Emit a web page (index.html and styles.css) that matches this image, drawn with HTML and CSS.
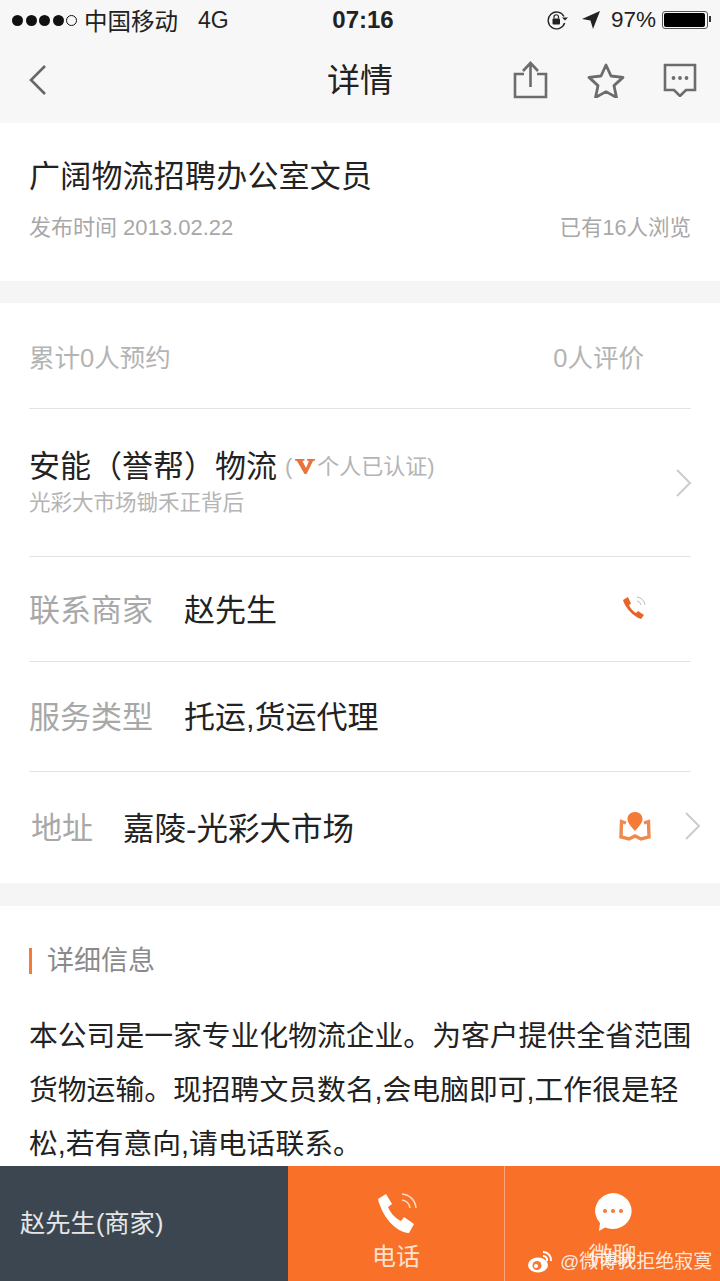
FILE: index.html
```html
<!DOCTYPE html>
<html lang="zh-CN">
<head>
    <meta charset="UTF-8">
    <meta name="viewport" content="width=720, initial-scale=1.0">
    <title>详情</title>
    <link rel="stylesheet" href="styles.css">
</head>
<body>
    <div class="top">
        <div class="status-bar">
            <div class="status-left">
                <span class="signal"><i></i><i></i><i></i><i></i><i class="empty"></i></span>
                <span class="carrier">中国移动</span>
                <span class="network">4G</span>
            </div>
            <div class="status-time">07:16</div>
            <div class="status-right">
                <svg class="lock-icon" width="24" height="20" viewBox="0 0 24 20"><path d="M18 6.5A8.4 8.4 0 1 0 18.600 13" fill="none" stroke="#222" stroke-width="1.400"/><path d="M16 7.500h6l-3 3z" fill="#222"/><rect x="6.500" y="8.500" width="7.500" height="6" rx="1" fill="#222"/><path d="M8 8.500V7a2.200 2.200 0 0 1 4.500 0v1.500" fill="none" stroke="#222" stroke-width="1.200"/></svg>
                <svg class="location-icon" width="20" height="20" viewBox="0 0 20 20"><path d="M19 1L1 9l8.500 1.500L12 19z" fill="#222"/></svg>
                <span class="battery-text">97%</span>
                <span class="battery"><span class="battery-level"></span></span>
            </div>
        </div>
        <div class="nav-bar">
            <svg class="back-icon" width="20" height="32" viewBox="0 0 20 32"><path d="M17 2L3 16l14 14" fill="none" stroke="#666" stroke-width="2.600"/></svg>
            <h1>详情</h1>
            <div class="nav-actions">
                <svg width="36" height="38" viewBox="0 0 36 38"><path d="M11 13H2v23h31V13h-9" fill="none" stroke="#6c6c6c" stroke-width="2.600"/><path d="M17.500 26V3M10 10l7.500-8L25 10" fill="none" stroke="#6c6c6c" stroke-width="2.600"/></svg>
                <svg width="38" height="36" viewBox="0 0 38 36"><path d="M19 3l5 11 12 1.400-9 8.200 2.500 11.900L19 29.600 8.500 35.500 11 23.600 2 15.400 14 14z" fill="none" stroke="#6c6c6c" stroke-width="2.800" stroke-linejoin="round"/></svg>
                <svg width="34" height="34" viewBox="0 0 34 34"><path d="M2 2h30v25h-9l-6 6-6-6H2z" fill="none" stroke="#6c6c6c" stroke-width="2.600"/><circle cx="10.500" cy="15" r="1.900" fill="#6c6c6c"/><circle cx="17" cy="15" r="1.900" fill="#6c6c6c"/><circle cx="23.500" cy="15" r="1.900" fill="#6c6c6c"/></svg>
            </div>
        </div>
    </div>

    <section class="card head-card">
        <h2>广阔物流招聘办公室文员</h2>
        <div class="meta">
            <span>发布时间 2013.02.22</span>
            <span class="views">已有16人浏览</span>
        </div>
    </section>

    <section class="card info-card">
        <div class="row row-stats">
            <span>累计0人预约</span>
            <span class="reviews">0人评价</span>
        </div>
        <div class="row row-company">
            <div class="company">
                <div class="company-name">安能（誉帮）物流<span class="verified">(<svg width="20" height="15" viewBox="0 0 20 15"><path d="M0 0h9.500v1.500L7.500 2l3.500 7 3-7-2-.5V0H20v1.500L18 2l-6.500 13h-2L2 2 0 1.500z" fill="#e8743b"/></svg>个人已认证)</span></div>
                <div class="company-addr">光彩大市场锄禾正背后</div>
            </div>
            <svg class="chevron" width="18" height="28" viewBox="0 0 18 28"><path d="M2 1l13 13L2 27" fill="none" stroke="#ccc" stroke-width="2"/></svg>
        </div>
        <div class="row row-contact">
            <span class="label">联系商家</span>
            <span class="value">赵先生</span>
            <svg class="contact-icon" width="26" height="26" viewBox="0 0 26 26"><path d="M1 5l5-3 3 6.500-2 1.500c1.500 3.500 4 6 7 8l2-2 6 4-3 4C12 22 3 13 1 5z" fill="#e8652a"/><path d="M15 2a9 9 0 0 1 8 8M15 6a5 5 0 0 1 4 4" fill="none" stroke="#bbb" stroke-width="1"/></svg>
        </div>
        <div class="row row-service">
            <span class="label">服务类型</span>
            <span class="value">托运,货运代理</span>
        </div>
        <div class="row row-address">
            <span class="label label-short">地址</span>
            <span class="value">嘉陵-光彩大市场</span>
            <svg class="map-icon" width="32" height="30" viewBox="0 0 32 30"><path d="M7 12l-4.500-1.500L2 26l8 2 6-3 6 3 8-2-.5-15.500L25 12" fill="none" stroke="#ee8a4f" stroke-width="3.400"/><path d="M16 1c4.500 0 7.500 3 7.500 7 0 4-4 8-7.500 12-3.500-4-7.500-8-7.500-12 0-4 3-7 7.500-7z" fill="#f47a38"/></svg>
            <svg class="chevron" width="18" height="28" viewBox="0 0 18 28"><path d="M2 1l13 13L2 27" fill="none" stroke="#ccc" stroke-width="2"/></svg>
        </div>
    </section>

    <section class="card detail-card">
        <h3>详细信息</h3>
        <p>本公司是一家专业化物流企业。为客户提供全省范围货物运输。现招聘文员数名,会电脑即可,工作很是轻松,若有意向,请电话联系。</p>
    </section>

    <div class="tab-bar">
        <div class="tab-name">赵先生(商家)</div>
        <div class="tab-action tab-phone">
            <svg width="42" height="42" viewBox="0 0 42 42"><path d="M1 7l8-5 6 10-4 3c2.500 6 7 11 13 14l3-4 10 7-5 9C18 40 5 24 1 7z" fill="#fff"/><path d="M25 2a15 15 0 0 1 14 14M25 8a9 9 0 0 1 8 8" fill="none" stroke="#ffd9c2" stroke-width="1.500"/></svg>
            <span>电话</span>
        </div>
        <div class="tab-action tab-chat">
            <svg width="40" height="40" viewBox="0 0 40 40"><path d="M20 1a19 18 0 1 1-8 34.500L6 39l1-8A19 18 0 0 1 20 1z" fill="#fff"/><circle cx="12" cy="19" r="2" fill="#f47a38"/><circle cx="20" cy="19" r="2" fill="#f47a38"/><circle cx="28" cy="19" r="2" fill="#f47a38"/></svg>
            <span>微聊</span>
        </div>
    </div>

    <div class="watermark">
        <svg width="26" height="24" viewBox="0 0 26 24"><ellipse cx="11" cy="15" rx="10" ry="7.500" fill="#fff"/><circle cx="10" cy="15.500" r="4.500" fill="#f47a38"/><circle cx="9" cy="16" r="2" fill="#fff"/><path d="M16 2a8 8 0 0 1 8 9M16 6a4 4 0 0 1 4 5" fill="none" stroke="#fff" stroke-width="2"/></svg>
        <span>@微博我拒绝寂寞</span>
    </div>
</body>
</html>
```

FILE: styles.css
```css
html, body {
    margin: 0;
    padding: 0;
    width: 720px;
    height: 1281px;
    overflow: hidden;
}
body {
    position: relative;
    display: flex;
    flex-direction: column;
    background-color: #f5f5f5;
    color: #1a1a1a;
    font-family: "Liberation Sans", "Noto Sans CJK SC", sans-serif;
}
svg {
    display: block;
    flex-shrink: 0;
}
.top {
    height: 123px;
    flex-shrink: 0;
    background-color: #f7f7f7;
}
.status-bar {
    height: 40px;
    display: grid;
    grid-template-columns: 1fr auto 1fr;
    align-items: center;
    padding: 0 12px 0 12px;
    font-size: 23px;
    color: #222;
}
.status-left, .status-right {
    display: flex;
    align-items: center;
}
.status-right {
    justify-content: flex-end;
}
.signal {
    display: flex;
    gap: 2.500px;
    margin-right: 7px;
}
.signal i {
    width: 11px;
    height: 11px;
    border-radius: 50%;
    background-color: #111;
}
.signal i.empty {
    width: 9px;
    height: 9px;
    background: none;
    border: 1px solid #111;
}
.carrier {
    font-size: 23.500px;
}
.network {
    margin-left: 20px;
}
.status-time {
    font-weight: bold;
    font-size: 24px;
    margin-left: 6px;
}
.lock-icon {
    margin-right: 11px;
}
.location-icon {
    margin-right: 10px;
}
.battery-text {
    margin-right: 6px;
    font-size: 22.500px;
}
.battery {
    width: 42px;
    height: 14px;
    padding: 1px;
    border: 1px solid #555;
    border-radius: 3px;
    display: block;
    position: relative;
}
.battery::after {
    content: "";
    position: absolute;
    right: -4px;
    top: 4px;
    width: 2px;
    height: 6px;
    background-color: #333;
}
.battery-level {
    display: block;
    width: 41px;
    height: 14px;
    background-color: #000;
    border-radius: 2px;
}
.nav-bar {
    height: 83px;
    display: flex;
    align-items: center;
    justify-content: space-between;
    padding: 0 23px 3px 28px;
    box-sizing: border-box;
    position: relative;
}
.nav-bar h1 {
    position: absolute;
    left: 0;
    right: 0;
    top: 18px;
    margin: 0;
    text-align: center;
    font-size: 33px;
    line-height: 46px;
    font-weight: 400;
    color: #222;
}
.nav-actions {
    display: flex;
    align-items: center;
    gap: 38px;
}
.card {
    background-color: #fff;
    flex-shrink: 0;
}
.head-card {
    height: 158px;
    box-sizing: border-box;
    padding: 31px 29px 0;
    margin-bottom: 22px;
}
.head-card h2 {
    margin: 0;
    font-size: 31px;
    letter-spacing: 0.200px;
    line-height: 46px;
    font-weight: 400;
    color: #222;
}
.meta {
    display: flex;
    justify-content: space-between;
    margin-top: 13px;
    font-size: 22px;
    line-height: 30px;
    color: #a8a8a8;
}
.views {
    font-size: 21.500px;
}
.info-card {
    height: 580px;
    margin-bottom: 23px;
    padding: 0 29px;
    box-sizing: border-box;
}
.row {
    display: flex;
    align-items: center;
    border-bottom: 1px solid #e3e3e3;
    box-sizing: border-box;
}
.row-stats {
    height: 106px;
    justify-content: space-between;
    font-size: 25.500px;
    color: #b4b4b4;
    padding-right: 47px;
}
.row-company {
    height: 148px;
    justify-content: space-between;
}
.company {
    margin-bottom: 4px;
}
.company-name {
    font-size: 31px;
    line-height: 44px;
    display: flex;
    align-items: center;
    color: #222;
}
.verified {
    display: flex;
    align-items: center;
    font-size: 22px;
    color: #b4b4b4;
    margin-left: 8px;
}
.verified svg {
    margin: 0 2px 0 3px;
}
.company-addr {
    font-size: 21.500px;
    line-height: 28px;
    color: #b4b4b4;
}
.row-contact {
    height: 105px;
    padding-bottom: 3px;
}
.row-service {
    height: 110px;
    padding-bottom: 4px;
}
.row-address {
    height: 111px;
    padding-bottom: 4px;
    border-bottom: none;
}
.label {
    width: 155px;
    font-size: 31px;
    color: #a8a8a8;
}
.label-short {
    width: 92px;
    padding-left: 2px;
}
.value {
    flex: 1;
    font-size: 31px;
    color: #222;
}
.row-address .value {
    font-size: 31.500px;
}
.contact-icon {
    margin-right: 43px;
}
.map-icon {
    margin-right: 33px;
}
.row-company .chevron {
    margin-right: -2px;
}
.row-address .chevron {
    margin-right: -11px;
}
.detail-card {
    flex: 1;
    min-height: 0;
    overflow: hidden;
    padding: 0 28px 0 29px;
}
.detail-card h3 {
    margin: 42px 0 0;
    font-size: 27px;
    line-height: 34px;
    font-weight: 400;
    color: #8a8a8a;
    border-left: 3px solid #f47a38;
    padding-left: 15px;
    height: 26px;
    display: flex;
    align-items: center;
}
.detail-card p {
    margin: 35px 0 0;
    font-size: 28.800px;
    line-height: 54px;
    color: #222;
}
.tab-bar {
    height: 115px;
    flex-shrink: 0;
    display: flex;
    background-color: #f97128;
    color: #fff;
}
.tab-name {
    width: 288px;
    box-sizing: border-box;
    padding: 0 20px 5px;
    display: flex;
    align-items: center;
    background-color: #3c4650;
    font-size: 25.300px;
    color: #e6e6e6;
}
.tab-action {
    display: flex;
    flex-direction: column;
    align-items: center;
    padding-top: 26px;
    box-sizing: border-box;
    font-size: 24px;
    line-height: 32px;
    color: #ffe3d2;
}
.tab-action span {
    margin-top: 7px;
}
.tab-phone {
    width: 217px;
    border-right: 1px solid #ffa678;
}
.tab-phone svg {
    margin-left: 3px;
}
.tab-chat {
    flex: 1;
}
.tab-chat span {
    margin-top: 8px;
}
.watermark {
    position: absolute;
    left: 527px;
    bottom: 6px;
    display: flex;
    align-items: center;
    gap: 7px;
    font-size: 19px;
    line-height: 26px;
    white-space: nowrap;
    color: rgba(255, 255, 255, 0.85);
}
```
